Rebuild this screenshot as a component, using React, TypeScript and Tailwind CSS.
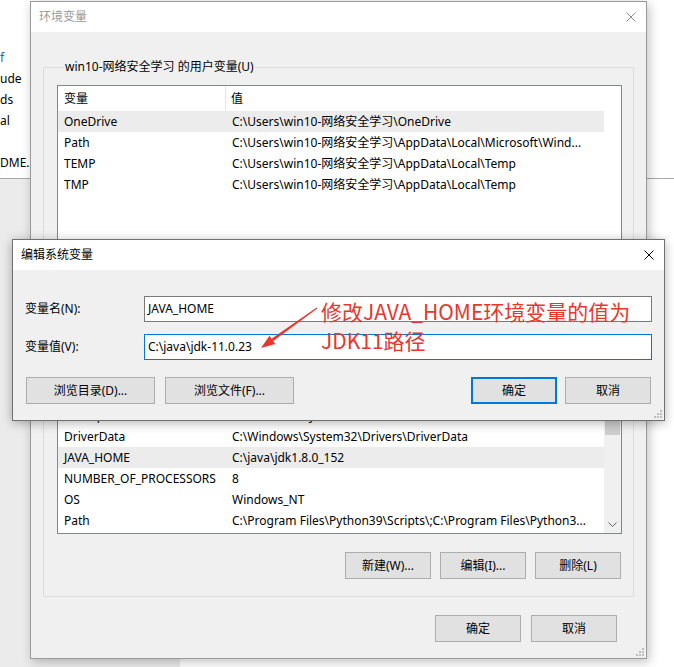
import React from 'react';

type Row = [string, string];

const userRows: Row[] = [
  ['OneDrive', 'C:\\Users\\win10-网络安全学习\\OneDrive'],
  ['Path', 'C:\\Users\\win10-网络安全学习\\AppData\\Local\\Microsoft\\Wind...'],
  ['TEMP', 'C:\\Users\\win10-网络安全学习\\AppData\\Local\\Temp'],
  ['TMP', 'C:\\Users\\win10-网络安全学习\\AppData\\Local\\Temp'],
];

const systemRows: Row[] = [
  ['CLASSPATH', '.;C:\\java\\jdk1.8.0_152\\lib'],
  ['ComSpec', 'C:\\Windows\\system32\\cmd.exe'],
  ['DriverData', 'C:\\Windows\\System32\\Drivers\\DriverData'],
  ['JAVA_HOME', 'C:\\java\\jdk1.8.0_152'],
  ['NUMBER_OF_PROCESSORS', '8'],
  ['OS', 'Windows_NT'],
  ['Path', 'C:\\Program Files\\Python39\\Scripts\\;C:\\Program Files\\Python3...'],
];

function CloseX({ color }: { color: string }) {
  return (
    <svg width="10" height="10" viewBox="0 0 10 10">
      <path d="M0.5 0.5L9.5 9.5M9.5 0.5L0.5 9.5" stroke={color} strokeWidth="1" />
    </svg>
  );
}

function Grip() {
  return (
    <svg width="8" height="8" viewBox="0 0 8 8" fill="#bdbdbd">
      <rect x="6" y="0" width="2" height="2" />
      <rect x="3" y="3" width="2" height="2" />
      <rect x="6" y="3" width="2" height="2" />
      <rect x="0" y="6" width="2" height="2" />
      <rect x="3" y="6" width="2" height="2" />
      <rect x="6" y="6" width="2" height="2" />
    </svg>
  );
}

function Btn({ children, className = '', primary = false }: { children: React.ReactNode; className?: string; primary?: boolean }) {
  return (
    <div
      className={`flex items-center justify-center h-[27px] bg-[#e1e1e1] text-[12px] text-black ${
        primary ? 'border-2 border-[#0078d7]' : 'border border-[#adadad]'
      } ${className}`}
    >
      {children}
    </div>
  );
}

function VarList({ rows, selected, scroll }: { rows: Row[]; selected: number; scroll?: boolean }) {
  return (
    <div className="mt-[10px] w-[565px] h-[176px] border border-[#828790] bg-white flex overflow-hidden">
      <div className="flex-1 flex flex-col">
        <div className="h-[25px] flex items-center text-[12px]">
          <div className="w-[168px] h-full flex items-center pl-[6px] border-r border-[#e5e5e5]">变量</div>
          <div className="pl-[5px]">值</div>
        </div>
        {rows.map(([k, v], i) => (
          <div
            key={k + i}
            className={`h-[21px] flex items-center text-[12px] whitespace-nowrap ${i === selected ? 'bg-[#ececec]' : ''}`}
          >
            <div className="w-[169px] pl-[6px]">{k}</div>
            <div className="pl-[5px]">{v}</div>
          </div>
        ))}
      </div>
      {scroll ? (
        <div className="w-[17px] bg-[#f0f0f0] flex flex-col items-center">
          <div className="h-[17px]" />
          <div className="mt-[23px] w-[15px] h-[36px] bg-[#cdcdcd]" />
          <div className="flex-1" />
          <div className="h-[17px] flex items-center justify-center">
            <svg width="9" height="5" viewBox="0 0 9 5">
              <path d="M0.5 0.5L4.5 4.5L8.5 0.5" stroke="#606060" fill="none" />
            </svg>
          </div>
        </div>
      ) : (
        <div className="w-[17px]" />
      )}
    </div>
  );
}

function Group({ label, className = '', children }: { label: string; className?: string; children: React.ReactNode }) {
  return (
    <div className={`border border-[#dcdcdc] pl-[13px] pr-[12px] pb-[17px] flex flex-col ${className}`}>
      <div className="-mt-[9px] ml-[7px] px-[1px] h-[16px] leading-[16px] text-[12px] bg-[#f0f0f0] w-fit">{label}</div>
      {children}
    </div>
  );
}

export default function App() {
  return (
    <div className="relative w-[674px] h-[667px] overflow-hidden bg-white text-black font-['Noto_Sans','Noto_Sans_CJK_SC',sans-serif]">
      {/* windows behind */}
      <div className="flex flex-col h-full">
        <div className="h-[178px] bg-white pt-[47px] text-[12px] leading-[21px]">
          <div className="text-[#2a5fc0]">f</div>
          <div>ude</div>
          <div>ds</div>
          <div>al</div>
          <div>&nbsp;</div>
          <div>DME.</div>
        </div>
        <div className="h-px bg-[#a8a8a8]" />
        <div className="flex-1 flex">
          <div className="w-[180px] bg-[#ebebeb]" />
          <div className="flex-1 bg-white" />
        </div>
      </div>

      {/* 环境变量 */}
      <div className="absolute left-[30px] top-[1px] w-[617px] h-[658px] border border-[#9a9a9a] bg-[#f0f0f0] shadow-[2px_3px_10px_rgba(0,0,0,0.25)] flex flex-col">
        <div className="h-[30px] bg-white flex items-center justify-between pl-[8px] pr-[10px]">
          <span className="text-[12px] text-[#9a9a9a]">环境变量</span>
          <CloseX color="#8a8a8a" />
        </div>
        <div className="px-[12px] flex flex-col">
          <Group label="win10-网络安全学习 的用户变量(U)" className="mt-[35px]">
            <VarList rows={userRows} selected={0} />
            <div className="mt-[18px] flex justify-end gap-[9px]">
              <Btn className="w-[86px]">新建(N)...</Btn>
              <Btn className="w-[86px]">编辑(E)...</Btn>
              <Btn className="w-[86px]">删除(D)</Btn>
            </div>
          </Group>
          <Group label="系统变量(S)" className="mt-[16px]">
            <VarList rows={systemRows} selected={3} scroll />
            <div className="mt-[18px] flex justify-end gap-[9px]">
              <Btn className="w-[86px]">新建(W)...</Btn>
              <Btn className="w-[86px]">编辑(I)...</Btn>
              <Btn className="w-[86px]">删除(L)</Btn>
            </div>
          </Group>
          <div className="mt-[18px] pr-[17px] flex justify-end gap-[10px]">
            <Btn className="w-[86px]">确定</Btn>
            <Btn className="w-[86px]">取消</Btn>
          </div>
        </div>
        <div className="absolute right-[2px] bottom-[2px]">
          <Grip />
        </div>
      </div>

      {/* 编辑系统变量 */}
      <div className="absolute left-[12px] top-[239px] w-[653px] h-[182px] border border-[#707070] bg-[#f0f0f0] shadow-[0_2px_10px_rgba(0,0,0,0.3)] flex flex-col">
        <div className="h-[30px] bg-white flex items-center justify-between pl-[8px] pr-[10px]">
          <span className="text-[12px]">编辑系统变量</span>
          <CloseX color="#000000" />
        </div>
        <div className="px-[12px] pt-[26px] flex flex-col text-[12px]">
          <div className="h-[26px] flex items-center">
            <div className="w-[119px]">变量名(N):</div>
            <div className="flex-1 h-full bg-white border border-[#7a7a7a] flex items-center pl-[3px]">JAVA_HOME</div>
          </div>
          <div className="h-[26px] mt-[12px] flex items-center">
            <div className="w-[119px]">变量值(V):</div>
            <div className="flex-1 h-full bg-white border border-[#0078d7] flex items-center pl-[3px]">C:\java\jdk-11.0.23</div>
          </div>
          <div className="mt-[17px] mx-px flex">
            <Btn className="w-[129px]">浏览目录(D)...</Btn>
            <Btn className="w-[129px] ml-[10px]">浏览文件(F)...</Btn>
            <div className="flex-1" />
            <Btn primary className="w-[86px]">确定</Btn>
            <Btn className="w-[86px] ml-[8px]">取消</Btn>
          </div>
        </div>
        <div className="absolute right-[2px] bottom-[2px]">
          <Grip />
        </div>
      </div>

      {/* annotation */}
      <div className="absolute left-[321px] top-[297px] text-[21px] leading-[29px] text-[#e8362d] font-['Noto_Sans_CJK_SC',sans-serif] whitespace-nowrap">
        <div>修改JAVA_HOME环境变量的值为</div>
        <div>JDK11路径</div>
      </div>
      <svg className="absolute inset-0 pointer-events-none" width="674" height="667" viewBox="0 0 674 667">
        <polygon points="317.3,308.4 316.7,307.6 271.5,338.7 273.3,341.1" fill="#e8362d" />
        <polygon points="261,348 269.5,335.8 275.3,344" fill="#e8362d" />
      </svg>
    </div>
  );
}
